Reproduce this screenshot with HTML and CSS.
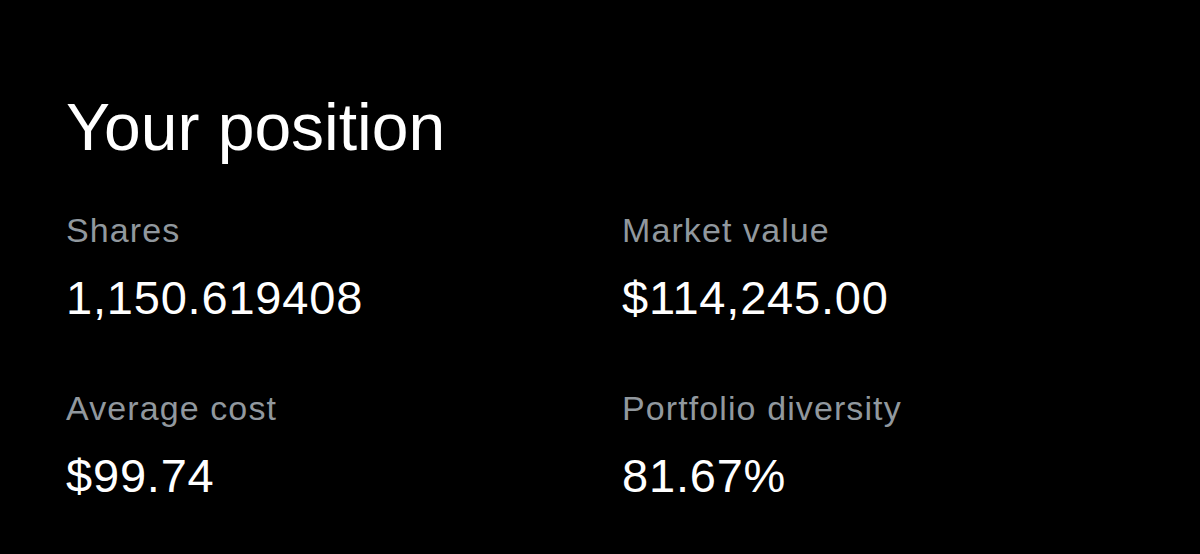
FILE: index.html
```html
<!DOCTYPE html>
<html lang="en">
<head>
<meta charset="utf-8">
<title>Your position</title>
<link rel="stylesheet" href="styles.css">
</head>
<body>
<main class="position">
  <h1 class="title">Your position</h1>
  <div class="stats">
    <div class="stat">
      <div class="label">Shares</div>
      <div class="value">1,150.619408</div>
    </div>
    <div class="stat">
      <div class="label">Market value</div>
      <div class="value">$114,245.00</div>
    </div>
    <div class="stat">
      <div class="label">Average cost</div>
      <div class="value">$99.74</div>
    </div>
    <div class="stat">
      <div class="label">Portfolio diversity</div>
      <div class="value">81.67%</div>
    </div>
  </div>
</main>
</body>
</html>
```
FILE: styles.css
```css
html, body {
  margin: 0;
  padding: 0;
  background: #000;
  height: 100%;
}
body {
  font-family: "Liberation Sans", Arial, sans-serif;
  color: #fff;
  overflow: hidden;
}
.position {
  padding: 94px 0 0 66px;
}
.title {
  margin: 0 0 50px 0;
  font-size: 66px;
  line-height: 66px;
  font-weight: 400;
  color: #fff;
}
.stats {
  display: grid;
  grid-template-columns: 556px 1fr;
  row-gap: 62px;
}
.stat {
  display: flex;
  flex-direction: column;
  gap: 20px;
}
.label {
  font-size: 34px;
  line-height: 40px;
  letter-spacing: 1.1px;
  color: #91989e;
}
.value {
  font-size: 47px;
  line-height: 56px;
  letter-spacing: 0.8px;
  color: #fff;
}
```
